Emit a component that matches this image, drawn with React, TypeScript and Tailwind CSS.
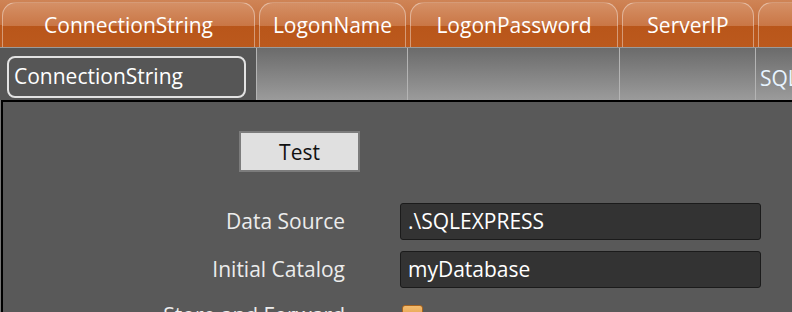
import React from 'react'

const columns = [
  { name: 'ConnectionString', width: 'w-[257px]' },
  { name: 'LogonName', width: 'w-[151px]' },
  { name: 'LogonPassword', width: 'w-[212px]' },
  { name: 'ServerIP', width: 'w-[136px]' },
  { name: 'DataSource', width: 'w-[220px]' },
]

export default function App() {
  return (
    <div className="w-[792px] h-[312px] overflow-hidden bg-[#5a5a5a] font-['Open_Sans',sans-serif] text-[21px]">
      {/* column headers */}
      <div className="flex h-[48px] border-b border-[#9a9a9a] bg-[linear-gradient(to_bottom,#cf8456_0%,#c56f3c_53%,#ba571b_54%,#bc5a1e_100%)]">
        {columns.map((col) => (
          <div key={col.name} className={`${col.width} shrink-0 px-[2px] pt-[2px]`}>
            <div className="flex h-full items-center justify-center rounded-t-[14px] border border-b-0 border-white/40 bg-[linear-gradient(to_bottom,#d59066_0%,#c97645_52%,#b9561a_53%,#bb591d_100%)] pt-[1px] text-white whitespace-nowrap overflow-hidden">
              {col.name}
            </div>
          </div>
        ))}
      </div>

      {/* data row */}
      <div className="flex h-[52px] bg-[linear-gradient(to_bottom,#6b6b6b,#9b9b9b)]">
        <div className="w-[257px] shrink-0 bg-[#565656] pl-[7px] pr-[10px] pt-[8px] border-r border-[#b4b4b4]">
          <div className="flex h-[42px] items-center rounded-[8px] border-2 border-[#e2e2e2] pl-[5px] text-white">
            ConnectionString
          </div>
        </div>
        <div className="w-[151px] shrink-0 border-r border-[#b4b4b4]" />
        <div className="w-[212px] shrink-0 border-r border-[#b4b4b4]" />
        <div className="w-[136px] shrink-0 border-r border-[#b4b4b4]" />
        <div className="flex-1 overflow-hidden pl-[4px] pt-[15px] text-[#e8f4ff] whitespace-nowrap">SQLEXPRESS</div>
      </div>

      {/* detail panel */}
      <div className="flex h-[212px]">
        <div className="w-[1px] shrink-0 bg-[#777777]" />
        <div className="flex-1 border-l-2 border-t-2 border-black bg-[#595959]">
          <div className="ml-[236px] mt-[29px] flex h-[41px] w-[121px] items-center justify-center border-2 border-[#7c7c7c] bg-[#e0e0e0] pt-[2px] text-[#111111]">
            Test
          </div>

          <div className="mt-[31px] flex flex-col gap-[11px]">
            <div className="flex h-[37px] items-center">
              <div className="w-[342px] shrink-0 text-right text-[#ececec]">Data Source</div>
              <div className="ml-[55px] flex h-[37px] w-[361px] items-center rounded-[3px] border border-[#1b1b1b] bg-[#333333] pl-[7px] text-white">
                .\SQLEXPRESS
              </div>
            </div>
            <div className="flex h-[37px] items-center">
              <div className="w-[342px] shrink-0 text-right text-[#ececec]">Initial Catalog</div>
              <div className="ml-[55px] flex h-[37px] w-[361px] items-center rounded-[3px] border border-[#1b1b1b] bg-[#333333] pl-[7px] text-white">
                myDatabase
              </div>
            </div>
            <div className="flex h-[37px] items-start">
              <div className="w-[342px] shrink-0 pt-[1px] text-right text-[#ececec]">Store and Forward</div>
              <div className="ml-[57px] mt-[6px] h-[21px] w-[21px] rounded-[3px] border border-[#a8641e] bg-[linear-gradient(to_bottom,#f3bb6e,#dc8f36)]" />
            </div>
          </div>
        </div>
      </div>
    </div>
  )
}
